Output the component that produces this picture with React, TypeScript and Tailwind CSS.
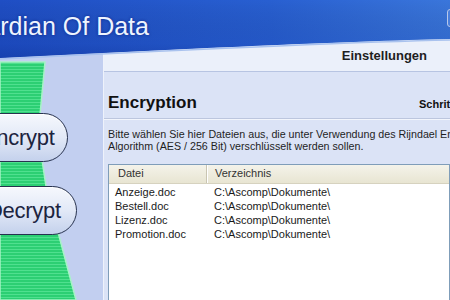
import React from 'react';

const files = [
  { name: 'Anzeige.doc', dir: 'C:\\Ascomp\\Dokumente\\' },
  { name: 'Bestell.doc', dir: 'C:\\Ascomp\\Dokumente\\' },
  { name: 'Lizenz.doc', dir: 'C:\\Ascomp\\Dokumente\\' },
  { name: 'Promotion.doc', dir: 'C:\\Ascomp\\Dokumente\\' },
];

function HeaderWave() {
  return (
    <svg className="absolute inset-0 h-full w-full" viewBox="0 0 450 62" preserveAspectRatio="none">
      <defs>
        <linearGradient id="waveH" x1="0" y1="0" x2="1" y2="0">
          <stop offset="0" stopColor="#1f4ec4" />
          <stop offset="0.6" stopColor="#285fd1" />
          <stop offset="1" stopColor="#3a76db" />
        </linearGradient>
        <linearGradient id="waveV" x1="0" y1="0" x2="0" y2="1">
          <stop offset="0" stopColor="#000" stopOpacity="0" />
          <stop offset="0.75" stopColor="#0a2a8a" stopOpacity="0.15" />
          <stop offset="1" stopColor="#0a2a8a" stopOpacity="0.35" />
        </linearGradient>
      </defs>
      <path d="M0 0 H450 V39 C350 41 160 50 0 58 Z" fill="url(#waveH)" />
      <path d="M0 0 H450 V39 C350 41 160 50 0 58 Z" fill="url(#waveV)" />
      <path d="M0 59 C160 51 350 42 450 40" fill="none" stroke="#a9c2ee" strokeWidth="1.5" />
    </svg>
  );
}

function GreenBand() {
  return (
    <svg className="absolute inset-0 h-full w-full" viewBox="0 0 103 300" preserveAspectRatio="none">
      <defs>
        <pattern id="stripes" width="4" height="3" patternUnits="userSpaceOnUse">
          <rect width="4" height="3" fill="#2ccf73" />
          <rect width="4" height="1" fill="#4fe08f" />
        </pattern>
      </defs>
      <polygon
        points="0,62 45,62 40,115 42,160 46,186 58,232 76,300 0,300"
        fill="url(#stripes)"
        stroke="#a6f3c6"
        strokeWidth="1.5"
      />
    </svg>
  );
}

function PillButton({ label, width, pad }: { label: string; width: string; pad: string }) {
  return (
    <button
      className={`relative z-10 ml-[-50px] ${width} ${pad} h-[49px] rounded-full border-[1.5px] border-[#27324f] bg-gradient-to-b from-[#f6f8fd] via-[#e2e9f7] to-[#c4d1ec] text-left text-[22px] leading-none tracking-[-0.3px] text-[#1c2440] shadow-[inset_0_1px_0_#ffffff]`}
    >
      {label}
    </button>
  );
}

export default function App() {
  return (
    <div className="relative flex h-[300px] w-[450px] overflow-hidden bg-[#dbe3f6] font-['Liberation_Sans',Arial,sans-serif]">
      <aside className="relative flex w-[103px] shrink-0 flex-col bg-[#c2cff0] pt-[113px]">
        <GreenBand />
        <PillButton label="Encrypt" width="w-[118px]" pad="pl-[31px]" />
        <div className="h-[24px]" />
        <PillButton label="Decrypt" width="w-[127px]" pad="pl-[36px]" />
      </aside>

      <main className="flex min-w-0 flex-1 flex-col border-l border-[#eef2fb]">
        <div className="flex h-[72px] shrink-0 items-end justify-end border-b border-[#b7c4e2] bg-[#ebf0fa] pb-[6px] pr-[23px]">
          <span className="text-[13px] font-bold text-[#1e1e1e]">Einstellungen</span>
        </div>

        <section className="flex min-w-0 flex-col">
          <div className="flex items-baseline border-b border-[#bcc6de] pb-[2px] pl-[4px] pt-[18px] shadow-[0_1px_0_#f2f5fc]">
            <h1 className="w-[311px] shrink-0 text-[17px] font-bold text-[#111]">Encryption</h1>
            <span className="whitespace-nowrap text-[11px] font-bold text-[#111]">Schritt 1 von 3</span>
          </div>

          <p className="mt-[9px] whitespace-nowrap pl-[4px] text-[10.7px] leading-[12px] text-[#1e1e1e]">
            Bitte wählen Sie hier Dateien aus, die unter Verwendung des Rijndael Encryption
            <br />
            Algorithm (AES / 256 Bit) verschlüsselt werden sollen.
          </p>

          <div className="ml-[4px] mt-[12px] h-[200px] border border-[#7f9db9] bg-white text-[11px]">
            <div className="flex h-[19px] items-center border-b border-[#d6d2bf] bg-gradient-to-b from-[#f4f3ea] to-[#e8e5d2] text-[#333]">
              <div className="flex w-[98px] items-center self-stretch border-r border-[#c9c5b2] pl-[9px] shadow-[1px_0_0_#ffffff]">
                Datei
              </div>
              <div className="pl-[8px]">Verzeichnis</div>
            </div>
            <div className="pt-[2px] text-[#1a1a1a]">
              {files.map((f) => (
                <div key={f.name} className="flex h-[14px] items-center">
                  <span className="w-[99px] pl-[6px]">{f.name}</span>
                  <span className="pl-[6px]">{f.dir}</span>
                </div>
              ))}
            </div>
          </div>
        </section>
      </main>

      <header className="absolute inset-x-0 top-0 h-[62px]">
        <HeaderWave />
        <div className="relative ml-[-47px] pt-[11px] text-[25px] leading-[30px] text-[#eef4ff] [text-shadow:0_0_3px_rgba(10,30,120,0.8)]">
          Guardian Of Data
        </div>
        <div className="absolute right-[-10px] top-[9px] h-[18px] w-[13px] rounded-[3px] border border-[#b8c8ea] bg-[#4a7fdc]" />
      </header>
    </div>
  );
}
